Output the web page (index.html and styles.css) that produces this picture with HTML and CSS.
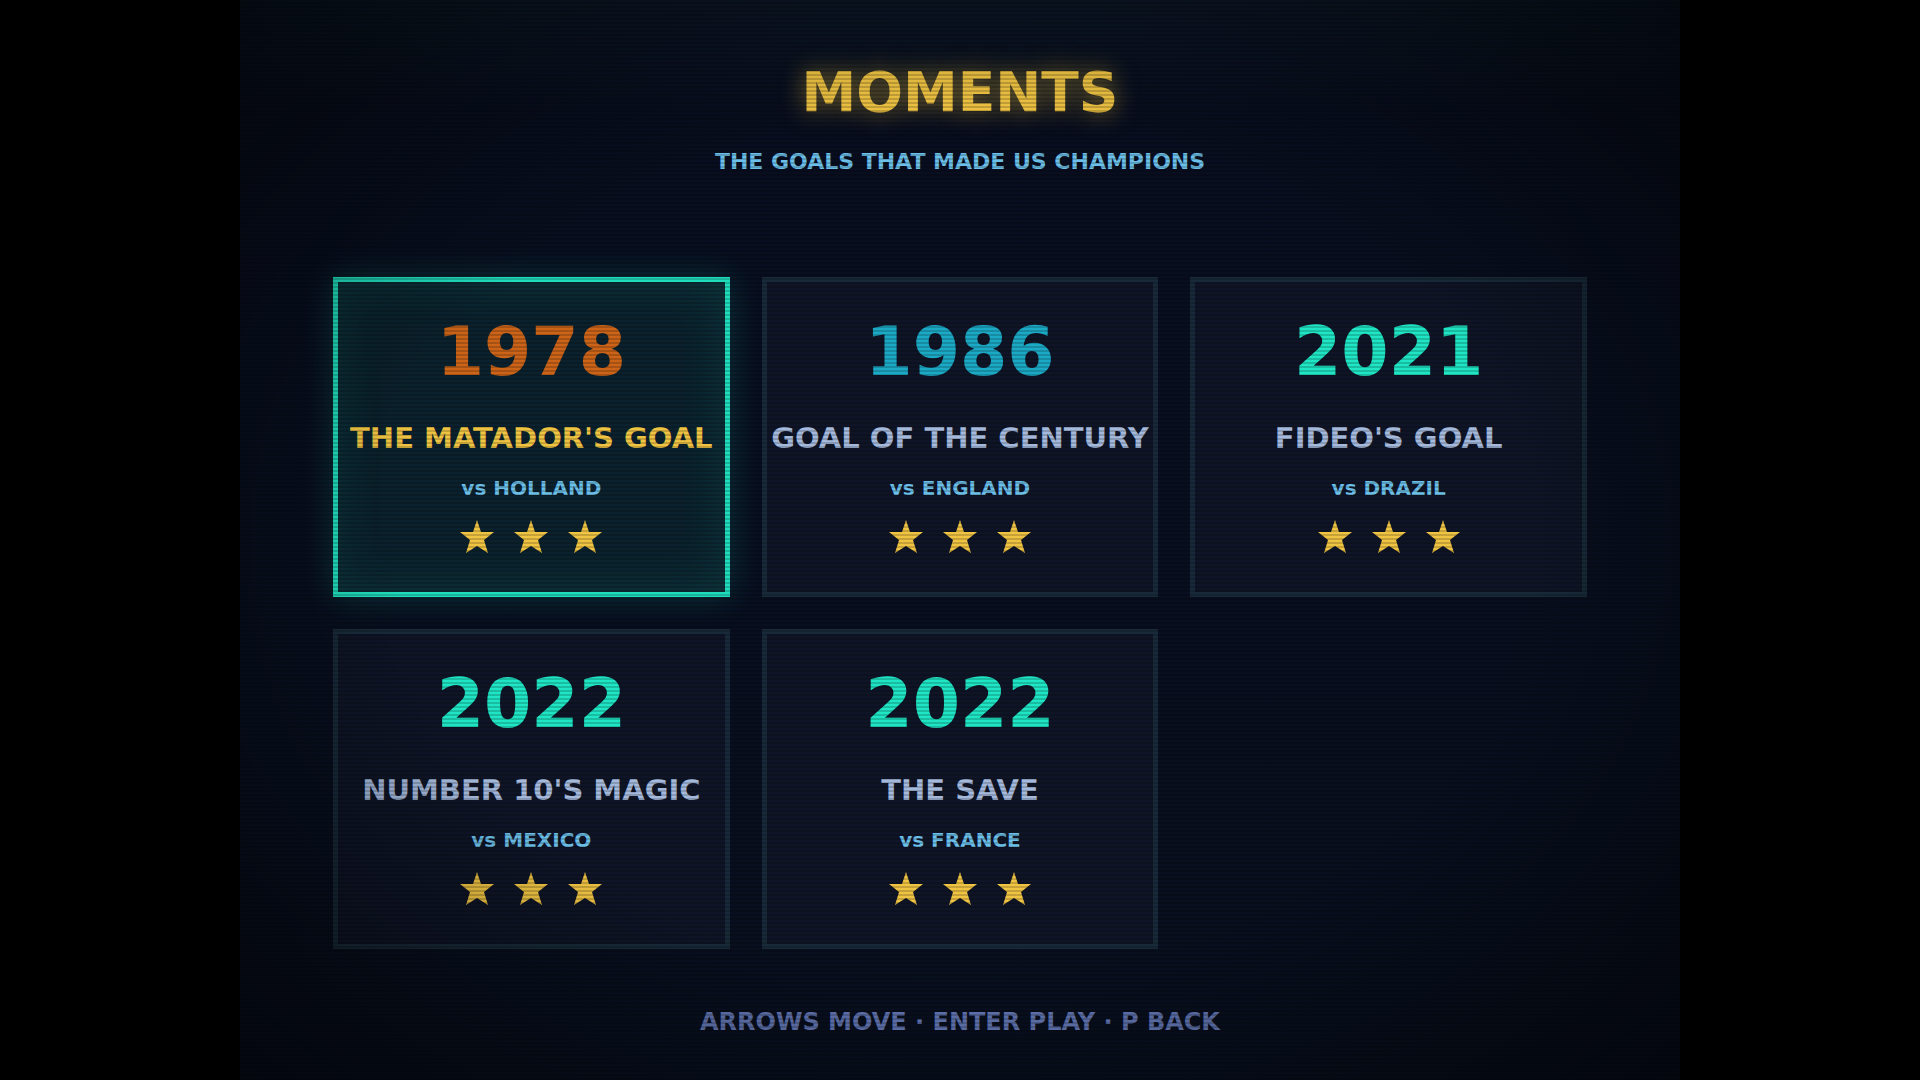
FILE: index.html
```html
<!DOCTYPE html>
<html lang="en">

<head>
    <meta charset="UTF-8">
    <meta name="viewport" content="width=device-width, initial-scale=1.0">
    <title>Moments</title>
    <link rel="stylesheet" href="styles.css">
</head>

<body>
    <!--Star shape shared by all cards-->
    <svg class="defs" aria-hidden="true">
        <symbol id="star" viewBox="0 0 34 34">
            <polygon points="17,0 21,12 34,12 24,20 28,33 17,26 6,33 10,20 0,12 13,12" />
        </symbol>
    </svg>

    <main class="screen">
        <header>
            <h1>MOMENTS</h1>
            <p class="subtitle">THE GOALS THAT MADE US CHAMPIONS</p>
        </header>

        <!--Goal selector-->
        <div class="grid">
            <button class="card selected" type="button">
                <span class="year orange">1978</span>
                <span class="name">THE MATADOR'S GOAL</span>
                <span class="rival">vs HOLLAND</span>
                <span class="stars">
                    <svg><use href="#star" /></svg>
                    <svg><use href="#star" /></svg>
                    <svg><use href="#star" /></svg>
                </span>
            </button>
            <button class="card" type="button">
                <span class="year blue">1986</span>
                <span class="name">GOAL OF THE CENTURY</span>
                <span class="rival">vs ENGLAND</span>
                <span class="stars">
                    <svg><use href="#star" /></svg>
                    <svg><use href="#star" /></svg>
                    <svg><use href="#star" /></svg>
                </span>
            </button>
            <button class="card" type="button">
                <span class="year">2021</span>
                <span class="name">FIDEO'S GOAL</span>
                <span class="rival">vs DRAZIL</span>
                <span class="stars">
                    <svg><use href="#star" /></svg>
                    <svg><use href="#star" /></svg>
                    <svg><use href="#star" /></svg>
                </span>
            </button>
            <button class="card" type="button">
                <span class="year">2022</span>
                <span class="name">NUMBER 10'S MAGIC</span>
                <span class="rival">vs MEXICO</span>
                <span class="stars">
                    <svg><use href="#star" /></svg>
                    <svg><use href="#star" /></svg>
                    <svg><use href="#star" /></svg>
                </span>
            </button>
            <button class="card" type="button">
                <span class="year">2022</span>
                <span class="name">THE SAVE</span>
                <span class="rival">vs FRANCE</span>
                <span class="stars">
                    <svg><use href="#star" /></svg>
                    <svg><use href="#star" /></svg>
                    <svg><use href="#star" /></svg>
                </span>
            </button>
        </div>

        <footer>ARROWS MOVE · ENTER PLAY · P BACK</footer>
    </main>
</body>

</html>
```

FILE: styles.css
```css
* {
    margin: 0;
    padding: 0;
    box-sizing: border-box;
    font-family: 'DejaVu Sans', Verdana, sans-serif;
    font-weight: bold;
}

body {
    display: flex;
    justify-content: center;
    min-height: 100vh;
    background-color: #000;
}

.defs {
    display: none;
}

/* 4:3 game screen */
.screen {
    position: relative;
    display: flex;
    flex-direction: column;
    width: 100%;
    max-width: 133.33vh;
    min-height: 100vh;
    padding: 60px 93px 44px;
    background: linear-gradient(#0b1726, #080e1f 10%, #080f1f);
    text-align: center;
}

/* Scanlines and vignette */
.screen::after {
    content: "";
    position: absolute;
    inset: 0;
    background:
        repeating-linear-gradient(rgba(0, 0, 0, 0) 0 2px, rgba(0, 0, 0, 0.18) 2px 4px),
        radial-gradient(ellipse, rgba(0, 0, 0, 0) 55%, rgba(0, 0, 0, 0.55));
    pointer-events: none;
}

h1 {
    font-size: 55px;
    line-height: 64px;
    color: #f0c443;
    text-shadow: 0 0 24px rgba(240, 196, 67, 0.6);
}

.subtitle {
    margin-top: 24px;
    font-size: 22px;
    line-height: 28px;
    color: #6cbfe8;
}

.grid {
    display: grid;
    grid-template-columns: repeat(3, minmax(0, 1fr));
    gap: 32px;
    margin-top: 101px;
}

.card {
    display: flex;
    flex-direction: column;
    align-items: center;
    padding: 38px 0;
    border: 5px solid #182a39;
    background: #0f1527;
    white-space: nowrap;
    cursor: pointer;
}

.card.selected {
    border-color: #1fdcbc;
    background: #0b222e;
    box-shadow: 0 0 32px rgba(31, 220, 188, 0.2), inset 0 0 48px rgba(31, 220, 188, 0.12);
}

.year {
    font-size: 68px;
    line-height: 64px;
    color: #1fe5c4;
}

.year.orange {
    color: #cb6418;
}

.year.blue {
    color: #1ba9c6;
}

.name {
    margin-top: 38px;
    font-size: 29px;
    line-height: 32px;
    color: #a4b9dc;
}

.selected .name {
    color: #f0c443;
}

.rival {
    margin-top: 22px;
    font-size: 20px;
    line-height: 24px;
    color: #6cbfe8;
}

.stars {
    display: flex;
    gap: 20px;
    margin-top: 20px;
}

.stars svg {
    width: 34px;
    height: 34px;
    fill: #f0c443;
}

footer {
    margin-top: auto;
    padding-top: 40px;
    font-size: 24px;
    line-height: 28px;
    color: #6478b6;
}

@media (max-width: 900px) {
    .screen {
        padding: 40px 20px;
    }

    .grid {
        grid-template-columns: 1fr;
        margin-top: 40px;
    }
}
```
